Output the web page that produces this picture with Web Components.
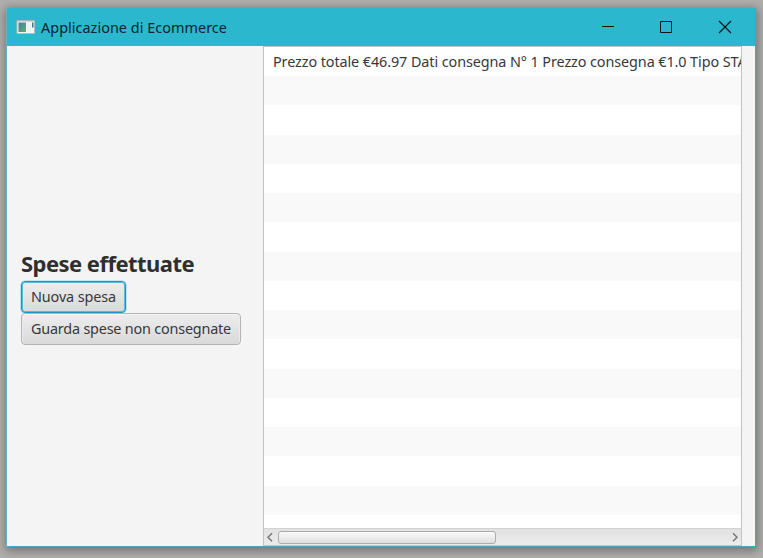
<!DOCTYPE html>
<html lang="it">
<head>
<meta charset="utf-8">
<title>Applicazione di Ecommerce</title>
<style>
html,body{margin:0;height:100%;overflow:hidden}
body{font-family:"Noto Sans","Open Sans",sans-serif;font-size:14.4px;color:#383838}
</style>
</head>
<body>
<app-desktop>
  <app-window caption="Applicazione di Ecommerce">
    <side-panel slot="side">
      <fit-text slot="title" width="173">Spese effettuate</fit-text>
      <fx-button focused><fit-text width="85">Nuova spesa</fit-text></fx-button>
      <fx-button><fit-text width="200">Guarda spese non consegnate</fit-text></fx-button>
    </side-panel>
    <list-view slot="main">
      <fit-text width="473.5">Prezzo totale €46.97 Dati consegna N° 1 Prezzo consegna €1.0 Tipo STA</fit-text>
    </list-view>
  </app-window>
</app-desktop>
<script>
const define = (name, html, setup) => customElements.define(name, class extends HTMLElement {
  constructor(){
    super();
    this.attachShadow({mode:'open'}).innerHTML = html;
  }
  connectedCallback(){ if (setup) setup(this, this.shadowRoot); }
});

define('fx-button', `<style>
  :host{display:block}
  button{display:flex;align-items:center;box-sizing:border-box;height:32px;padding:0 9px 1px;
    border:1px solid #b4b4b4;border-radius:4px;color:inherit;font:inherit;
    background:linear-gradient(#ededed,#d9d9d9);box-shadow:inset 0 1px #f6f6f6,inset 1px 0 #ececec,inset -1px 0 #ececec}
  :host([focused]) button{border-color:#1b95bf;box-shadow:inset 0 0 0 1px #58bddc,0 0 0 .6px #8fd9f0}
</style><button><slot></slot></button>`);

define('side-panel', `<style>
  :host{display:flex;flex-direction:column;justify-content:center;align-items:flex-start;
    box-sizing:border-box;padding:0 0 1px 14px;background:#f4f4f4}
  h1{margin:0;height:34px;line-height:32px;font-size:22px;font-weight:700;color:#2f2f2f}
</style><h1><slot name="title"></slot></h1><slot></slot>`);

define('scroll-bar', `<style>
  :host{display:flex;align-items:center;height:17px;box-sizing:border-box;border-top:1px solid #d2d2d2;
    background:linear-gradient(#e1e1e1,#ececec)}
  svg{width:14px;height:15px;flex:none;fill:none;stroke:#777;stroke-width:1.5}
  .track{flex:1;display:flex}
  .thumb{box-sizing:border-box;width:218px;height:13px;border:1px solid #acacac;border-radius:3px;
    background:linear-gradient(#fafafa,#dedede)}
</style>
<svg viewBox="0 0 14 15"><path d="M8 3.2 4 7.200l4 4"/></svg>
<div class="track"><div class="thumb"></div></div>
<svg viewBox="0 0 14 15"><path d="M6 3.200l4 4-4 4"/></svg>`);

define('list-view', `<style>
  :host{display:flex;flex-direction:column;box-sizing:border-box;border:1px solid #c3c3c3;overflow:hidden;background:#fff}
  .rows{flex:1;overflow:hidden;background:repeating-linear-gradient(#fff 0 29.25px,#f9f9f9 29.25px 58.5px)}
  .row{display:flex;align-items:center;height:29px;padding-left:9px}
</style><div class="rows"><div class="row"><slot></slot></div></div><scroll-bar></scroll-bar>`);

define('title-bar', `<style>
  :host{display:flex;align-items:center;height:38px;background:#2bb8ce;color:#07252c}
  .icon{width:20px;height:16px;margin:0 5px 0 9px}
  .label{flex:1}
  .controls{display:flex;margin-right:5px}
  .controls svg{width:58.5px;height:38px;fill:none;stroke:#0a161a;stroke-width:1}
</style>
<svg class="icon" viewBox="0 0 20 16">
  <defs><linearGradient id="g" x2="1" y2="1"><stop stop-color="#4580a0"/><stop offset="1" stop-color="#63ad72"/></linearGradient></defs>
  <path fill="#f4f5f4" stroke="#b5bcbd" d="M1 1.5h17.500v13H1z"/>
  <path fill="#aeb5b5" d="M1 1h18v1.500H1z"/>
  <path fill="url(#g)" d="M2.500 3.500h7.500v9.500H2.500z"/>
  <path fill="#f0f3f1" d="M11 3.500h4V13h-4z"/>
  <path fill="#427886" d="M16 3.500h1.500v5H16z"/>
</svg>
<div class="label"></div>
<div class="controls">
  <svg viewBox="0 0 58.5 38"><path d="M27 18.500h12"/></svg>
  <svg viewBox="0 0 58.5 38"><path d="M27.500 13.500h11v11h-11z"/></svg>
  <svg viewBox="0 0 58.5 38"><path d="M27 13l12 12M39 13l-12 12" stroke-width="1.2"/></svg>
</div>`, (el, root) => {
  const t = document.createElement('fit-text');
  t.setAttribute('width', '186');
  t.textContent = el.getAttribute('caption');
  root.querySelector('.label').replaceChildren(t);
});

define('app-window', `<style>
  :host{display:flex;flex-direction:column;box-sizing:border-box;width:749px;height:539px;
    border:solid #47a8b5;border-width:0 1px 1px 0;box-shadow:-1px 0 #63b4bf,0 2px 9px 2px rgba(0,0,0,.34)}
  .body{flex:1;min-height:0;display:grid;grid-template-columns:256px 479px 1fr;background:#f4f4f4}
</style><div class="bar"></div>
<div class="body"><slot name="side"></slot><slot name="main"></slot></div>`, (el, root) => {
  const b = document.createElement('title-bar');
  b.setAttribute('caption', el.getAttribute('caption'));
  root.querySelector('.bar').replaceChildren(b);
});

define('app-desktop', `<style>
  :host{display:block;box-sizing:border-box;width:763px;height:558px;padding:8px 0 0 7px;background:#b1afae;overflow:hidden}
</style><slot></slot>`);

// Spreads its text over the given width by adjusting the letter spacing.
// Defined last, so that the text is measured in the font of its final parent.
define('fit-text', `<style>
  :host{display:inline-block;white-space:nowrap;flex:none}
  span{display:inline-block}
</style><span><slot></slot></span>`, (el, root) => {
  const s = root.querySelector('span');
  const w = +el.getAttribute('width');
  s.style.letterSpacing = '0px';
  const n = el.textContent.length;
  s.style.letterSpacing = ((w - s.getBoundingClientRect().width) / n) + 'px';
});
</script>
</body>
</html>
